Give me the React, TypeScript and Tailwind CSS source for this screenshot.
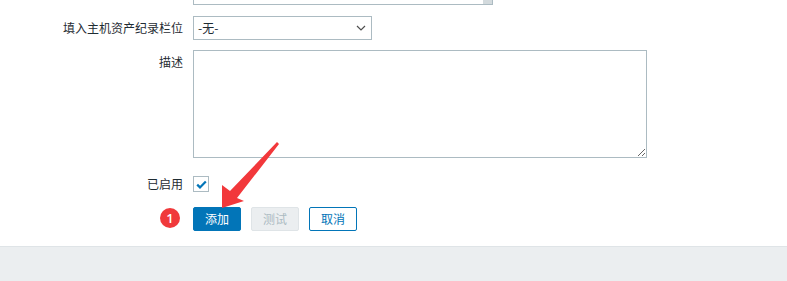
import React from "react";

const font = { fontFamily: '"Noto Sans CJK SC", "Liberation Sans", Arial, sans-serif' };

function Row({ label, children, top = false, className = "" }: { label: string; children: React.ReactNode; top?: boolean; className?: string }) {
  return (
    <div className={`flex gap-[10px] ${top ? "items-start" : "items-center"} ${className}`}>
      <div className={`w-[183px] shrink-0 text-right text-[12px] leading-[14px] text-[#1f2c33] ${top ? "pt-[5px]" : ""}`}>
        {label}
      </div>
      {children}
    </div>
  );
}

export default function App() {
  return (
    <div className="relative h-[281px] w-[787px] overflow-hidden bg-white" style={font}>
      {/* form */}
      <div className="h-[246px]">
        {/* previous field, scrolled off the top */}
        <div className="ml-[193px] flex h-[5px] w-[300px] justify-end border-x border-b border-[#acbbc2]">
          <div className="h-full w-[9px] bg-[#d3dadd]" />
        </div>

        <Row label="填入主机资产纪录栏位" className="mt-[11px]">
          <div className="flex h-[24px] w-[179px] items-center justify-between border border-[#acbbc2] bg-white pl-[4px] pr-[5px] text-[12px] text-[#1f2c33]">
            <span>-无-</span>
            <svg width="10" height="6" viewBox="0 0 10 6" fill="none">
              <path d="M1 1l4 4 4-4" stroke="#4f4f4f" strokeWidth="1.2" />
            </svg>
          </div>
        </Row>

        <Row label="描述" top className="mt-[10px]">
          <textarea
            readOnly
            className="h-[108px] w-[454px] border border-[#acbbc2] bg-white outline-none"
          />
        </Row>

        <Row label="已启用" className="mt-[18px]">
          <div className="flex h-[16px] w-[16px] items-center justify-center border border-[#acbbc2] bg-white">
            <svg width="11" height="9" viewBox="0 0 11 9" fill="none">
              <path d="M1.2 4.6l2.8 2.8L9.8 1.4" stroke="#0275b8" strokeWidth="2.2" />
            </svg>
          </div>
        </Row>

        <div className="ml-[193px] mt-[15px] flex gap-[10px]">
          <button className="h-[24px] w-[48px] rounded-[2px] border border-[#0275b8] bg-[#0275b8] text-[12px] text-white">
            添加
          </button>
          <button className="h-[24px] w-[48px] rounded-[2px] border border-[#dfe4e7] bg-[#ebeef0] text-[12px] text-[#acbbc2]">
            测试
          </button>
          <button className="h-[24px] w-[48px] rounded-[2px] border border-[#0275b8] bg-white text-[12px] text-[#0275b8]">
            取消
          </button>
        </div>
      </div>

      {/* footer band */}
      <div className="h-[35px] border-t border-[#dfe4e7] bg-[#ebeef0]" />

      {/* annotation: badge */}
      <div className="absolute left-[160px] top-[208px] flex h-[20px] w-[20px] items-center justify-center rounded-full bg-[#f0393b] text-[13px] font-semibold leading-none text-white" style={{ fontFamily: '"Open Sans", Arial, sans-serif' }}>
        1
      </div>

      {/* annotation: arrow */}
      <svg className="pointer-events-none absolute left-0 top-0" width="787" height="281" viewBox="0 0 787 281">
        <polygon
          points="222,208 222,185 230,191 277,142 279,144 237,198 244,201"
          fill="#f2383b"
        />
      </svg>
    </div>
  );
}
